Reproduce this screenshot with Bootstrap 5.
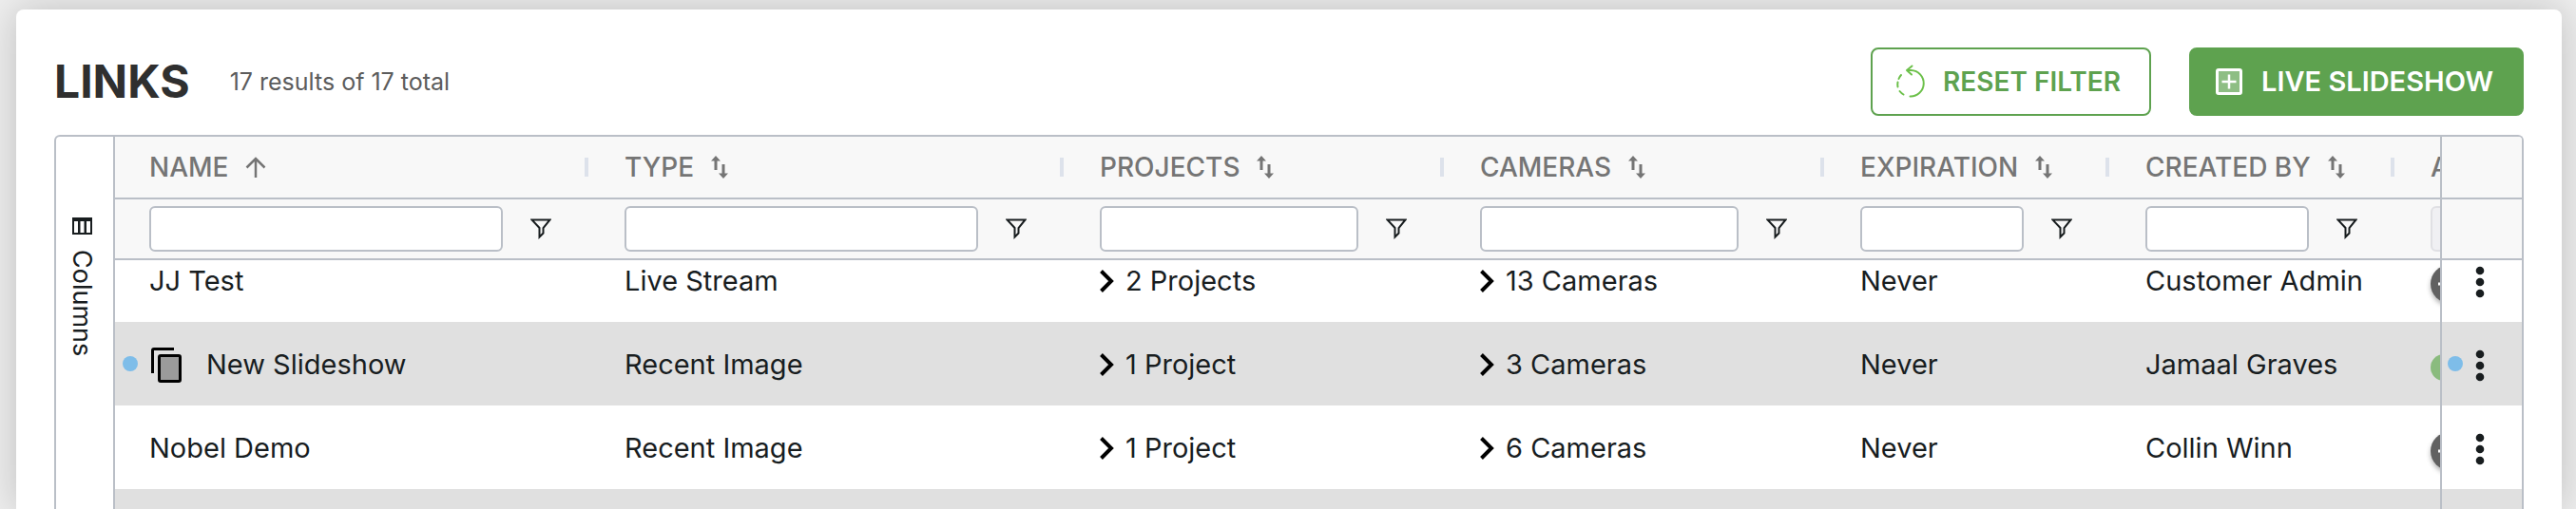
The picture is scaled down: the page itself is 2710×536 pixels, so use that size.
<!DOCTYPE html>
<html lang="en">
<head>
<meta charset="utf-8">
<meta name="viewport" content="width=device-width, initial-scale=1">
<title>Links</title>
<link href="https://cdn.jsdelivr.net/npm/bootstrap@5.3.0/dist/css/bootstrap.min.css" rel="stylesheet">
<style>
  :root { --line: #babfc7; --ink: #181d1f; --brand: #5ea24f; }
  body { background: #eee; color: var(--ink); font-family: Inter, "Liberation Sans", sans-serif; font-size: 29px; line-height: 36px; }
  svg { flex: none; display: block; }
  .page { height: 100vh; padding: 10px 15px 0 17px; }
  .panel { padding: 40px 40px 0; border-radius: 8px 8px 0 0; box-shadow: 0 0 40px rgba(0, 0, 0, .2); }
  .page-title { font-size: 48px; line-height: 60px; font-weight: 700; color: #2f2f2f; }
  .result-count { font-size: 25px; color: #5c5c5c; margin-left: 42px; }
  .action { --bs-btn-font-size: 28px; --bs-btn-font-weight: 600; --bs-btn-line-height: 36px; --bs-btn-border-width: 2px;
    --bs-btn-border-radius: 8px; --bs-btn-padding-x: 24px; --bs-btn-padding-y: 16px; --bs-btn-border-color: var(--brand); gap: 18px; }
  .action-outline { --bs-btn-color: var(--brand); --bs-btn-bg: #fff; width: 295px; }
  .action-solid { --bs-btn-font-size: 29px; --bs-btn-color: #fff; --bs-btn-bg: var(--brand); width: 352px; }
  .links-grid { border: 2px solid var(--line); border-bottom: 0; border-radius: 6px 6px 0 0; margin-top: 20px; }
  .side { width: 62px; border-right: 2px solid var(--line); padding: 85px 6px 0 0; flex: none; }
  .side-tab { background: none; border: 0; padding: 0; color: var(--ink); font-size: 27px; line-height: 32px; gap: 16px; writing-mode: vertical-rl; }
  .viewport { scrollbar-width: none; }
  .viewport::-webkit-scrollbar { display: none; }
  .data-table { table-layout: fixed; width: 2786px; border-collapse: separate; border-spacing: 0; }
  .data-table th, .data-table td { padding: 0 0 0 36px; text-align: left; white-space: nowrap; overflow: hidden; position: relative; }
  .data-table thead { position: sticky; top: 0; z-index: 3; }
  .data-table thead th, .data-table thead td { background: #f8f8f8; border-bottom: 2px solid var(--line); }
  .heads th { height: 66px; font-size: 28px; font-weight: 500; color: #757575; }
  .heads th:not(.pinned)::after { content: ""; position: absolute; right: 2px; top: 22px; width: 4px; height: 20px; background: #dde2eb; }
  .filters td { height: 64px; }
  .data-table tbody td { height: 88px; padding-top: 2px; background: #fff; }
  .data-table tbody tr:nth-child(even) td { background: #e0e0e0; }
  .data-table .pinned { position: sticky; right: 0; z-index: 2; border-left: 2px solid var(--line); padding: 0; }
  .data-table tbody .pinned { padding: 4px 4px 0 0; }
  .sort, .funnel, .more, .expand { background: none; border: 0; padding: 0; color: inherit; font-weight: inherit; }
  .sort { gap: 18px; }
  .filter-box { height: 48px; border: 2px solid var(--line); border-radius: 6px; box-shadow: none; padding: 0 10px; min-width: 0; }
  .filter-box:disabled { background: #f0f0f3; border-color: #e0e0e4; }
  .filter-cell { gap: 29px; padding-right: 41px; }
  .expand { gap: 12px; }
  .flag { position: absolute; width: 16px; height: 16px; border-radius: 50%; background: #7ebde9; top: 36px; left: 8px; }
  .pinned .flag { left: 6px; }
  .state { width: 28px; height: 28px; border-radius: 50%; background: #8abb7e; margin-top: 6px; }
  .state-off { width: 40px; height: 40px; background: #616161; color: #fff; box-shadow: 0 3px 5px rgba(0, 0, 0, .3); }
</style>
</head>
<body>
<svg width="0" height="0" class="position-absolute" aria-hidden="true">
  <symbol id="i-sort" viewBox="0 0 18 24"><path fill="currentColor" d="M5 0l5 5.500H6.500V15h-3V5.500H0zM13 24l-5-5.500h3.500V9h3v9.500H18z"/></symbol>
  <symbol id="i-funnel" viewBox="0 0 22 22"><path fill="none" stroke="currentColor" stroke-width="2" d="M1.500 1.500h19L13.500 10v5.500L9.500 19.500V10z"/></symbol>
  <symbol id="i-chev" viewBox="0 0 15 24"><path fill="none" stroke="#000" stroke-width="4" d="M1.500 1.500L12 12 1.500 22.500"/></symbol>
  <symbol id="i-more" viewBox="0 0 10 34"><g fill="currentColor"><circle cx="5" cy="5" r="4.300"/><circle cx="5" cy="17" r="4.300"/><circle cx="5" cy="29" r="4.300"/></g></symbol>
  <symbol id="i-plus" viewBox="0 0 24 24"><path fill="none" stroke="currentColor" stroke-width="3" d="M0 12h24M12 0v24"/></symbol>
</svg>

<div class="page overflow-hidden">
  <main class="panel bg-white h-100 d-flex flex-column">
    <header class="d-flex align-items-center">
      <h1 class="page-title mb-0">LINKS</h1>
      <span class="result-count">17 results of 17 total</span>
      <div class="d-flex ms-auto" style="gap:40px">
        <button type="button" class="btn action action-outline d-flex align-items-center">
          <svg width="32" height="36" viewBox="0 0 32 36" fill="none" stroke="#6cc04a" stroke-width="2" stroke-linecap="round" stroke-linejoin="round"><path d="M12 6h4.500a13.500 13.500 0 0 1-1 27.500M17.500 1.500L12 6l5 4.500M8.500 31.500a14 14 0 0 1-4-3.500M2.500 23.500a13 13 0 0 1 0-5M3.500 15a13 13 0 0 1 2.500-4"/></svg>
          RESET FILTER
        </button>
        <button type="button" class="btn action action-solid d-flex align-items-center">
          <svg width="32" height="28" viewBox="0 0 32 28" fill="none" stroke="#fff"><rect x="3.500" y="1.500" width="25" height="25" rx="1.500" stroke-width="3" fill="#fff" fill-opacity=".3"/><path stroke-width="2.500" d="M8.500 14h15M16 6.500v15"/></svg>
          LIVE SLIDESHOW
        </button>
      </div>
    </header>

    <section class="links-grid d-flex flex-grow-1 overflow-hidden">
      <aside class="side d-flex justify-content-center align-items-start">
        <button type="button" class="side-tab d-flex align-items-center">
          <svg width="21" height="18" viewBox="0 0 21 18"><path fill="currentColor" fill-rule="evenodd" d="M0 0h21v18H0zM2 4v12h4V4zM8.500 4v12h4V4zM15 4v12h4V4z"/></svg>
          Columns
        </button>
      </aside>
      <div class="viewport flex-grow-1 overflow-auto" id="viewport">
        <table class="data-table">
          <colgroup><col width="500"><col width="500"><col width="400"><col width="400"><col width="300"><col width="300"><col width="300"><col width="86"></colgroup>
          <thead>
            <tr class="heads">
              <th scope="col"><button type="button" class="sort d-flex align-items-center">NAME <svg width="22" height="24" viewBox="0 0 22 24" fill="none" stroke="currentColor" stroke-width="2.500"><path d="M11 23V3M1.500 12.500L11 3l9.500 9.500"/></svg></button></th>
              <th scope="col"><button type="button" class="sort d-flex align-items-center">TYPE <svg width="18" height="24"><use href="#i-sort"/></svg></button></th>
              <th scope="col"><button type="button" class="sort d-flex align-items-center">PROJECTS <svg width="18" height="24"><use href="#i-sort"/></svg></button></th>
              <th scope="col"><button type="button" class="sort d-flex align-items-center">CAMERAS <svg width="18" height="24"><use href="#i-sort"/></svg></button></th>
              <th scope="col"><button type="button" class="sort d-flex align-items-center">EXPIRATION <svg width="18" height="24"><use href="#i-sort"/></svg></button></th>
              <th scope="col"><button type="button" class="sort d-flex align-items-center">CREATED BY <svg width="18" height="24"><use href="#i-sort"/></svg></button></th>
              <th scope="col">A</th>
              <th scope="col" class="pinned"></th>
            </tr>
            <tr class="filters">
              <td><div class="filter-cell d-flex align-items-center"><input type="text" class="form-control filter-box" aria-label="Name"><button type="button" class="funnel" aria-label="Name"><svg width="22" height="22"><use href="#i-funnel"/></svg></button></div></td>
              <td><div class="filter-cell d-flex align-items-center"><input type="text" class="form-control filter-box" aria-label="Type"><button type="button" class="funnel" aria-label="Type"><svg width="22" height="22"><use href="#i-funnel"/></svg></button></div></td>
              <td><div class="filter-cell d-flex align-items-center"><input type="text" class="form-control filter-box" aria-label="Projects"><button type="button" class="funnel" aria-label="Projects"><svg width="22" height="22"><use href="#i-funnel"/></svg></button></div></td>
              <td><div class="filter-cell d-flex align-items-center"><input type="text" class="form-control filter-box" aria-label="Cameras"><button type="button" class="funnel" aria-label="Cameras"><svg width="22" height="22"><use href="#i-funnel"/></svg></button></div></td>
              <td><div class="filter-cell d-flex align-items-center"><input type="text" class="form-control filter-box" aria-label="Expiration"><button type="button" class="funnel" aria-label="Expiration"><svg width="22" height="22"><use href="#i-funnel"/></svg></button></div></td>
              <td><div class="filter-cell d-flex align-items-center"><input type="text" class="form-control filter-box" aria-label="Created by"><button type="button" class="funnel" aria-label="Created by"><svg width="22" height="22"><use href="#i-funnel"/></svg></button></div></td>
              <td><div class="filter-cell d-flex align-items-center"><input type="text" class="form-control filter-box" aria-label="A" disabled></div></td>
              <td class="pinned"></td>
            </tr>
          </thead>
          <tbody>
            <tr>
              <td>JJ Test</td>
              <td>Live Stream</td>
              <td><button type="button" class="expand d-flex align-items-center"><svg width="15" height="24"><use href="#i-chev"/></svg>2 Projects</button></td>
              <td><button type="button" class="expand d-flex align-items-center"><svg width="15" height="24"><use href="#i-chev"/></svg>13 Cameras</button></td>
              <td>Never</td>
              <td>Customer Admin</td>
              <td><div class="state state-off d-flex align-items-center justify-content-center"><svg width="24" height="24"><use href="#i-plus"/></svg></div></td>
              <td class="pinned"><button type="button" class="more d-flex mx-auto" aria-label="More"><svg width="10" height="34"><use href="#i-more"/></svg></button></td>
            </tr>
            <tr>
              <td><span class="flag"></span><div class="d-flex align-items-center"><svg width="36" height="40" viewBox="0 0 36 40" fill="none" stroke="#000" stroke-width="3"><path stroke-linejoin="round" d="M3.500 29V5a1.500 1.500 0 0 1 1.500-1.500h21"/><rect x="10.500" y="10.500" width="22" height="27" rx="1.500" fill="#9b9b9b"/></svg><span class="ms-4">New Slideshow</span></div></td>
              <td>Recent Image</td>
              <td><button type="button" class="expand d-flex align-items-center"><svg width="15" height="24"><use href="#i-chev"/></svg>1 Project</button></td>
              <td><button type="button" class="expand d-flex align-items-center"><svg width="15" height="24"><use href="#i-chev"/></svg>3 Cameras</button></td>
              <td>Never</td>
              <td>Jamaal Graves</td>
              <td><div class="state"></div></td>
              <td class="pinned"><span class="flag"></span><button type="button" class="more d-flex mx-auto" aria-label="More"><svg width="10" height="34"><use href="#i-more"/></svg></button></td>
            </tr>
            <tr>
              <td>Nobel Demo</td>
              <td>Recent Image</td>
              <td><button type="button" class="expand d-flex align-items-center"><svg width="15" height="24"><use href="#i-chev"/></svg>1 Project</button></td>
              <td><button type="button" class="expand d-flex align-items-center"><svg width="15" height="24"><use href="#i-chev"/></svg>6 Cameras</button></td>
              <td>Never</td>
              <td>Collin Winn</td>
              <td><div class="state state-off d-flex align-items-center justify-content-center"><svg width="24" height="24"><use href="#i-plus"/></svg></div></td>
              <td class="pinned"><button type="button" class="more d-flex mx-auto" aria-label="More"><svg width="10" height="34"><use href="#i-more"/></svg></button></td>
            </tr>
            <tr><td></td><td></td><td></td><td></td><td></td><td></td><td></td><td class="pinned"></td></tr>
          </tbody>
        </table>
      </div>
    </section>
  </main>
</div>
<script src="https://cdn.jsdelivr.net/npm/bootstrap@5.3.0/dist/js/bootstrap.bundle.min.js"></script>
<script>
  // Open the list part-way through its first row.
  document.getElementById('viewport').scrollTop = 23;
</script>
</body>
</html>
